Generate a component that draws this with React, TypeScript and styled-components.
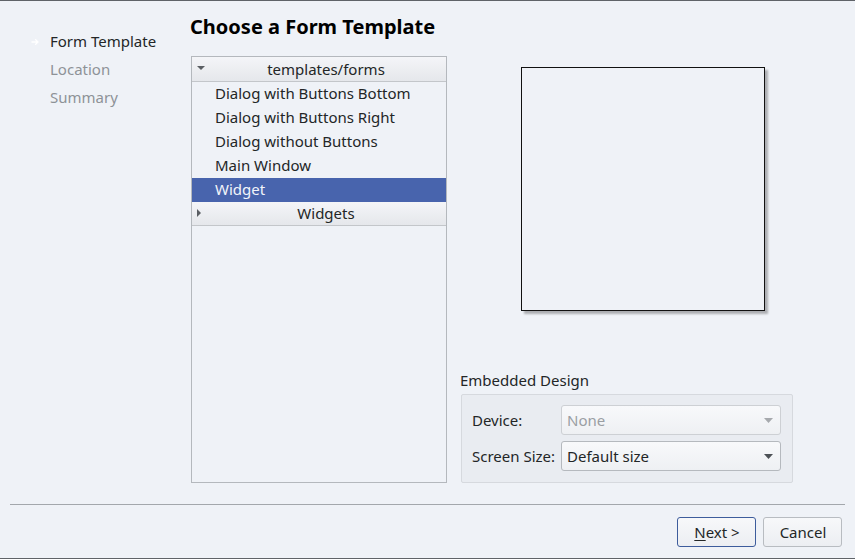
import React from "react";
import styled, { createGlobalStyle } from "styled-components";

const Global = createGlobalStyle`
  html, body { margin: 0; padding: 0; background: #eff2f7; }
  body { font-family: "Noto Sans", "DejaVu Sans", sans-serif; font-size: 15px; color: #232627; }
`;

const Window = styled.div`
  width: 855px;
  height: 559px;
  box-sizing: border-box;
  border-top: 1px solid #5f6368;
  border-bottom: 1px solid #5f6368;
  background: #eff2f7;
  display: flex;
  flex-direction: column;
  overflow: hidden;
`;

const Body = styled.div`
  display: flex;
  flex: 1;
`;

const Sidebar = styled.nav`
  width: 191px;
  padding-top: 26px;
  box-sizing: border-box;
  display: flex;
  flex-direction: column;
`;

const NavItem = styled.div<{ $active?: boolean }>`
  position: relative;
  height: 28px;
  line-height: 28px;
  padding-left: 50px;
  color: ${(p) => (p.$active ? "#232627" : "#8e9297")};
`;

const NavArrow = styled.svg`
  position: absolute;
  left: 31px;
  top: 11px;
`;

const Main = styled.div`
  flex: 1;
  display: flex;
  flex-direction: column;
`;

const Title = styled.h1`
  margin: 0;
  margin-left: -1px;
  height: 55px;
  line-height: 52px;
  font-size: 20px;
  font-weight: 700;
  color: #000;
`;

const Content = styled.div`
  display: flex;
`;

const Tree = styled.div`
  width: 256px;
  height: 427px;
  box-sizing: border-box;
  border: 1px solid #b4b8bd;
  background: #eff2f7;
  display: flex;
  flex-direction: column;
`;

const Header = styled.div<{ $h?: number }>`
  position: relative;
  height: ${(p) => p.$h ?? 25}px;
  box-sizing: border-box;
  border-bottom: 1px solid #c3c6ca;
  background: linear-gradient(#f4f5f8, #e5e7eb);
  text-align: center;
  padding-left: 14px;
  line-height: ${(p) => (p.$h ?? 25) - 1}px;
  color: #232627;
`;

const HeaderIcon = styled.span`
  position: absolute;
  left: 5px;
  top: 0;
  bottom: 1px;
  display: flex;
  align-items: center;
`;

const Item = styled.div<{ $selected?: boolean }>`
  height: 24px;
  line-height: 22px;
  padding-left: 23px;
  background: ${(p) => (p.$selected ? "#4864ad" : "transparent")};
  color: ${(p) => (p.$selected ? "#f2f4fa" : "#232627")};
`;

const Right = styled.div`
  flex: 1;
  display: flex;
  flex-direction: column;
  padding-left: 13px;
`;

const PreviewWrap = styled.div`
  height: 313px;
  padding-top: 11px;
  box-sizing: border-box;
  padding-left: 61px;
`;

const Preview = styled.div`
  width: 244px;
  height: 244px;
  box-sizing: border-box;
  border: 1px solid #111;
  background: #eff2f7;
  box-shadow: 3px 3px 2px rgba(0, 0, 0, 0.28);
`;

const GroupTitle = styled.div`
  height: 25px;
  line-height: 22px;
`;

const Group = styled.div`
  width: 332px;
  height: 89px;
  box-sizing: border-box;
  margin-left: 1px;
  border: 1px solid #d6d9de;
  border-radius: 2px;
  background: #e9ecf1;
  padding: 10px 11px 0 10px;
  display: grid;
  grid-template-columns: 89px 220px;
  grid-auto-rows: 30px;
  align-content: start;
  row-gap: 6px;
  align-items: center;
`;

const Label = styled.div`
  line-height: 30px;
`;

const Combo = styled.div<{ $disabled?: boolean }>`
  position: relative;
  height: 30px;
  box-sizing: border-box;
  border: 1px solid ${(p) => (p.$disabled ? "#cdd0d4" : "#b5b9be")};
  border-radius: 3px;
  background: linear-gradient(#f8f9fb, #eef0f3);
  padding-left: 5px;
  line-height: 28px;
  color: ${(p) => (p.$disabled ? "#9a9ea3" : "#232627")};
`;

const ComboArrow = styled.svg`
  position: absolute;
  right: 7px;
  top: 12px;
`;

const Footer = styled.div`
  height: 54px;
  display: flex;
  flex-direction: column;
`;

const Separator = styled.div`
  height: 1px;
  margin: 0 10px 0 10px;
  background: #a3a7ac;
`;

const Buttons = styled.div`
  display: flex;
  justify-content: flex-end;
  gap: 7px;
  padding: 12px 13px 0 0;
`;

const Button = styled.button<{ $default?: boolean }>`
  width: 79px;
  height: 30px;
  box-sizing: border-box;
  border: 1px solid ${(p) => (p.$default ? "#3d5c9c" : "#b8bcc1")};
  border-radius: 3px;
  background: linear-gradient(#f7f8fa, #eceef2);
  font-family: "Noto Sans", "DejaVu Sans", sans-serif;
  font-size: 15px;
  color: #232627;
  padding: 0 0 0 1px;
  u { text-decoration: underline; text-underline-offset: 2px; }
`;

const Triangle = ({ dir, color }: { dir: "down" | "right"; color: string }) =>
  dir === "down" ? (
    <svg width="8" height="5" viewBox="0 0 8 5">
      <polygon points="0,0 8,0 4,4" fill={color} />
    </svg>
  ) : (
    <svg width="5" height="8" viewBox="0 0 5 8">
      <polygon points="0,0 4,4 0,8" fill={color} />
    </svg>
  );

export default function App() {
  return (
    <>
      <Global />
      <Window>
        <Body>
          <Sidebar>
            <NavItem $active>
              <NavArrow width="8" height="8" viewBox="0 0 8 8">
                <path d="M0.5 4 H7 M4.2 1.2 L7 4 L4.2 6.8" stroke="#ffffff" strokeWidth="1.3" fill="none" />
              </NavArrow>
              Form Template
            </NavItem>
            <NavItem>Location</NavItem>
            <NavItem>Summary</NavItem>
          </Sidebar>
          <Main>
            <Title>Choose a Form Template</Title>
            <Content>
              <Tree>
                <Header>
                  <HeaderIcon>
                    <Triangle dir="down" color="#5a5e63" />
                  </HeaderIcon>
                  templates/forms
                </Header>
                <Item>Dialog with Buttons Bottom</Item>
                <Item>Dialog with Buttons Right</Item>
                <Item>Dialog without Buttons</Item>
                <Item>Main Window</Item>
                <Item $selected>Widget</Item>
                <Header $h={24}>
                  <HeaderIcon>
                    <Triangle dir="right" color="#5a5e63" />
                  </HeaderIcon>
                  Widgets
                </Header>
              </Tree>
              <Right>
                <PreviewWrap>
                  <Preview />
                </PreviewWrap>
                <GroupTitle>Embedded Design</GroupTitle>
                <Group>
                  <Label>Device:</Label>
                  <Combo $disabled>
                    None
                    <ComboArrow width="9" height="5" viewBox="0 0 9 5">
                      <polygon points="0,0 9,0 4.5,5" fill="#a6a9ad" />
                    </ComboArrow>
                  </Combo>
                  <Label>Screen Size:</Label>
                  <Combo>
                    Default size
                    <ComboArrow width="9" height="5" viewBox="0 0 9 5">
                      <polygon points="0,0 9,0 4.5,5" fill="#4d5156" />
                    </ComboArrow>
                  </Combo>
                </Group>
              </Right>
            </Content>
          </Main>
        </Body>
        <Footer>
          <Separator />
          <Buttons>
            <Button $default>
              <u>N</u>ext &gt;
            </Button>
            <Button>Cancel</Button>
          </Buttons>
        </Footer>
      </Window>
    </>
  );
}
